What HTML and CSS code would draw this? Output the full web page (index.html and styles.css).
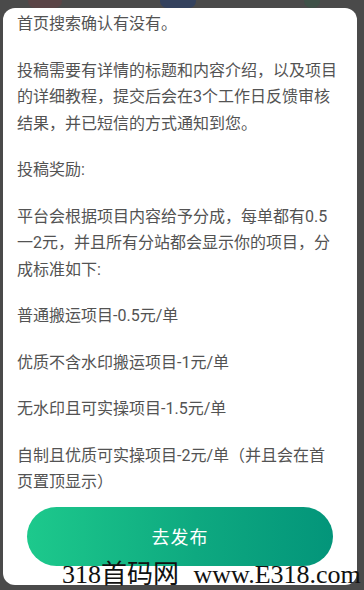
FILE: index.html
```html
<!DOCTYPE html>
<html lang="zh-CN">
<head>
  <meta charset="UTF-8">
  <meta name="viewport" content="width=device-width, initial-scale=1.0">
  <title>投稿须知</title>
  <link rel="stylesheet" href="styles.css">
</head>
<body>

  <div class="backdrop">
    <span class="blob blob-red"></span>
    <span class="blob blob-blue"></span>
    <span class="blob blob-green"></span>
  </div>

  <div class="sheet">
    <p>首页搜索确认有没有。</p>
    <p>投稿需要有详情的标题和内容介绍，以及项目的详细教程，提交后会在3个工作日反馈审核结果，并已短信的方式通知到您。</p>
    <p>投稿奖励:</p>
    <p>平台会根据项目内容给予分成，每单都有0.5一2元，并且所有分站都会显示你的项目，分成标准如下:</p>
    <p>普通搬运项目-0.5元/单</p>
    <p>优质不含水印搬运项目-1元/单</p>
    <p>无水印且可实操项目-1.5元/单</p>
    <p>自制且优质可实操项目-2元/单（并且会在首页置顶显示）</p>

    <button class="publish-btn">去发布</button>
  </div>

  <div class="watermark">318首码网 www.E318.com</div>

</body>
</html>
```

FILE: styles.css
```css
* {
  margin: 0;
  padding: 0;
  box-sizing: border-box;
}

body {
  width: 364px;
  height: 590px;
  overflow: hidden;
  background-color: #4a4a4a;
  font-family: Roboto, "Noto Sans CJK SC", sans-serif;
  color: #535353;
  position: relative;
}

/* faint app icons under the dim overlay */
.backdrop .blob {
  position: absolute;
  top: -6px;
  height: 14px;
  border-radius: 7px;
}

.blob-red {
  left: 28px;
  width: 34px;
  background: #5a4446;
}

.blob-blue {
  left: 160px;
  width: 36px;
  background: #34425e;
}

.blob-green {
  left: 304px;
  width: 16px;
  background: #3f5148;
}

.sheet {
  position: relative;
  margin: 8px 7px 0 3px;
  height: 577px;
  background: #ffffff;
  border-radius: 12px;
  padding: 3px 19px 0 14px;
  display: flex;
  flex-direction: column;
}

.sheet p {
  font-size: 16px;
  line-height: 26.5px;
  margin-bottom: 20px;
}

.sheet p:last-of-type {
  margin-bottom: 0;
}

.publish-btn {
  margin: 11px 5px 0 10px;
  height: 59px;
  border: none;
  border-radius: 30px;
  background: linear-gradient(90deg, #1dc98c 0%, #0ea980 55%, #03957a 100%);
  color: #ffffff;
  font-family: "Noto Sans CJK SC", sans-serif;
  font-size: 18px;
  letter-spacing: 1px;
  cursor: pointer;
}

.watermark {
  position: absolute;
  left: 62px;
  top: 561px;
  font-family: "Liberation Serif", "Noto Sans CJK SC", serif;
  font-size: 26px;
  line-height: 28px;
  color: #111111;
  white-space: nowrap;
  word-spacing: 8px;
}
```
